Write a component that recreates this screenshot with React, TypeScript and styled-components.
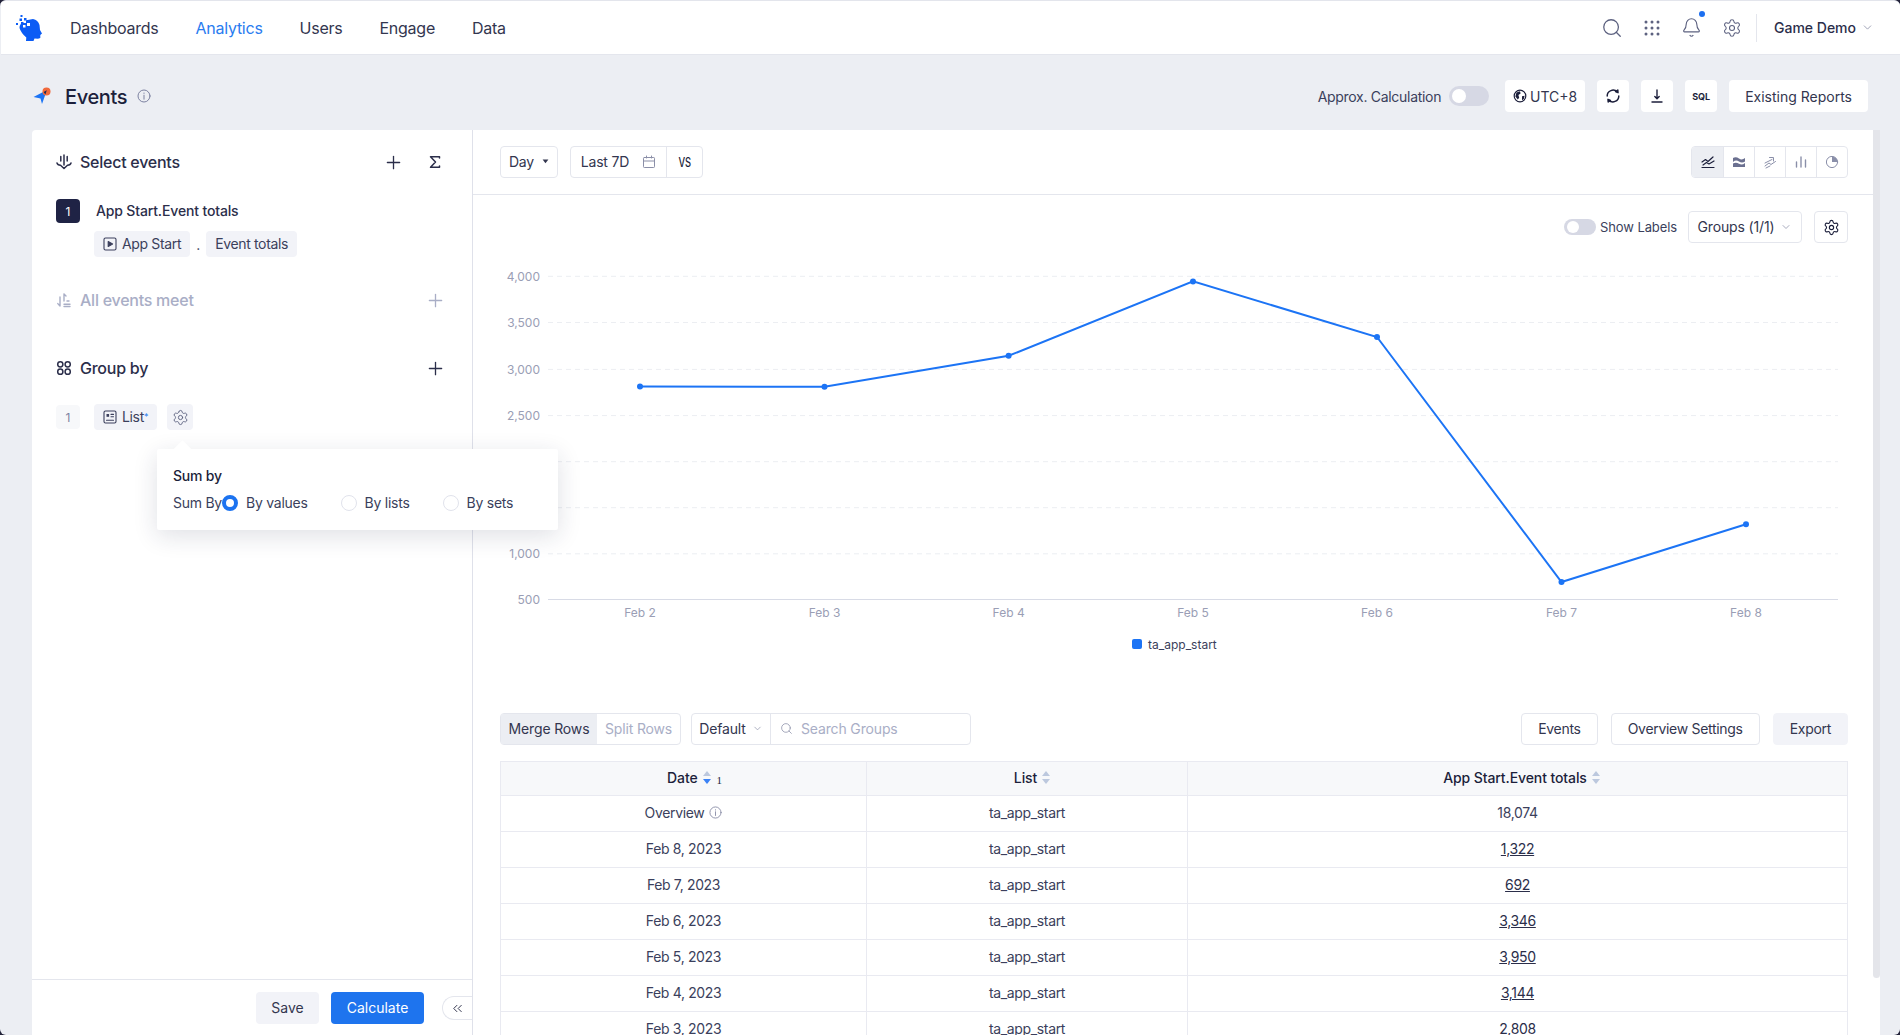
import { Search, Bell, Settings, ChevronDown, Plus, ChevronsLeft } from "lucide-react";
import styled, { createGlobalStyle } from "styled-components";

const GlobalStyle = createGlobalStyle`
  html, body {
    margin: 0;
    padding: 0;
    height: 100%;
    background: #23233a;
    overflow: hidden;
  }
  body {
    font-family: "Inter", "Liberation Sans", sans-serif;
    color: #2b2e4a;
  }
  * { box-sizing: border-box; }
`;

// Layout
const Page = styled.div`
  width: 1900px;
  height: 1035px;
  display: flex;
  flex-direction: column;
  background: #eceef3;
  border-radius: 6px;
  overflow: hidden;
  border-top: 1px solid #e3e5ec;
`;

const TopBar = styled.header`
  height: 54px;
  flex: none;
  display: flex;
  align-items: center;
  background: #fff;
  margin-left: 1px;
  border-bottom: 1px solid #e4e6ed;
  padding: 0 26px 0 13px;
`;

const Logo = styled.svg`
  width: 30px;
  height: 30px;
  flex: none;
`;

const Nav = styled.nav`
  display: flex;
  gap: 37px;
  margin-left: 26px;
`;

const NavLink = styled.a<{ $active?: boolean }>`
  font-size: 16px;
  line-height: 24px;
  letter-spacing: -0.25px;
  color: ${(p) => (p.$active ? "#2a7cf0" : "#33364f")};
`;

const TopActions = styled.div`
  margin-left: auto;
  display: flex;
  align-items: center;
  gap: 20px;
  color: #5d6280;
`;

const IconSlot = styled.span`
  position: relative;
  display: flex;
  width: 20px;
  height: 20px;
  align-items: center;
  justify-content: center;

  svg {
    flex: none;
  }
`;

const BellDot = styled.i`
  position: absolute;
  top: -7px;
  right: -3px;
  width: 6px;
  height: 6px;
  border-radius: 50%;
  background: #1c6ff0;
`;

const TopDivider = styled.span`
  width: 1px;
  height: 28px;
  background: #e4e6ed;
  margin-left: -6px;
`;

const Workspace = styled.span`
  display: flex;
  align-items: center;
  gap: 5px;
  margin-left: -3px;
  font-size: 14px;
  font-weight: 500;
  color: #2b2e4a;

  svg {
    color: #8b8fa8;
  }
`;

const TitleRow = styled.div`
  height: 75px;
  flex: none;
  display: flex;
  align-items: flex-start;
  padding: 25px 32px 0 33px;
`;

const TitleBlock = styled.div`
  height: 32px;
  display: flex;
  align-items: center;
`;

const Title = styled.h1`
  margin: 1px 0 0 13px;
  font-size: 20px;
  line-height: 28px;
  font-weight: 500;
  letter-spacing: -0.35px;
  color: #1c1f3b;
`;

const TitleInfo = styled.span`
  margin-left: 10px;
  display: flex;
  color: #7c81a0;
`;

const TitleActions = styled.div`
  margin-left: auto;
  display: flex;
  align-items: center;
  gap: 12px;
`;

const ApproxLabel = styled.span`
  font-size: 14px;
  letter-spacing: -0.3px;
  color: #3b3f5c;
  margin-right: -4px;
`;

const Toggle = styled.span<{ $small?: boolean }>`
  position: relative;
  display: block;
  flex: none;
  width: ${(p) => (p.$small ? 32 : 40)}px;
  height: ${(p) => (p.$small ? 16 : 20)}px;
  margin-right: ${(p) => (p.$small ? 0 : 4)}px;
  border-radius: 10px;
  background: #d6d8e4;

  &::after {
    content: "";
    position: absolute;
    left: 3px;
    top: ${(p) => (p.$small ? 2 : 3)}px;
    width: ${(p) => (p.$small ? 12 : 14)}px;
    height: ${(p) => (p.$small ? 12 : 14)}px;
    border-radius: 50%;
    background: #fff;
  }
`;

const SolidButton = styled.button<{ $square?: boolean; $width?: number }>`
  height: 32px;
  width: ${(p) => (p.$square ? "32px" : p.$width ? `${p.$width}px` : "auto")};
  padding: ${(p) => (p.$square || p.$width ? "0" : "0 16px")};
  display: flex;
  align-items: center;
  justify-content: center;
  gap: 3px;
  border: 0;
  border-radius: 4px;
  background: #fff;
  font-family: inherit;
  font-size: 14px;
  color: #33364f;
`;

const SqlMark = styled.span`
  font-size: 9px;
  font-weight: 700;
  color: #1c1f3b;
`;

const Body = styled.main`
  flex: 1;
  min-height: 0;
  display: flex;
  margin: 0 20px 0 32px;
  background: #fff;
  border-radius: 4px 4px 0 0;
`;

// Left panel
const LeftPanel = styled.aside`
  position: relative;
  z-index: 2;
  width: 441px;
  flex: none;
  display: flex;
  flex-direction: column;
  padding-top: 20px;
  border-right: 1px solid #dfe1ea;
`;

const SectionHead = styled.div<{ $muted?: boolean; $gap?: number }>`
  height: 24px;
  margin-top: ${(p) => p.$gap ?? 0}px;
  padding: 0 29px 0 24px;
  display: flex;
  align-items: center;
  color: ${(p) => (p.$muted ? "#a9aec6" : "#2b2e4a")};
`;

const SectionTitle = styled.span`
  margin-left: 8px;
  font-size: 16px;
  font-weight: 500;
  letter-spacing: -0.25px;
`;

const SectionTools = styled.div`
  margin-left: auto;
  display: flex;
  gap: 26px;
`;

const AddSlot = styled.span`
  width: 16px;
  height: 16px;
  display: flex;
  align-items: center;
  justify-content: center;

  svg {
    flex: none;
  }
`;

const EventRow = styled.div`
  margin: 25px 0 0 24px;
  display: flex;
  align-items: center;
  gap: 16px;
`;

const EventBadge = styled.span`
  width: 24px;
  height: 24px;
  border-radius: 4px;
  background: #1f2345;
  color: #fff;
  font-size: 12px;
  display: flex;
  align-items: center;
  justify-content: center;
`;

const EventName = styled.span`
  padding-bottom: 1px;
  font-size: 14px;
  font-weight: 500;
  letter-spacing: -0.15px;
  color: #2b2e4a;
`;

const ChipRow = styled.div`
  margin: 8px 0 0 62px;
  display: flex;
  align-items: center;
`;

const Chip = styled.span`
  height: 26px;
  padding: 0 9px 1px;
  display: flex;
  align-items: center;
  gap: 5px;
  border-radius: 4px;
  background: #f2f3f8;
  font-size: 14px;
  letter-spacing: -0.35px;
  color: #3b3f5c;
  white-space: nowrap;
`;

const ChipDot = styled.span`
  width: 16px;
  text-align: center;
  font-size: 14px;
  color: #3b3f5c;
`;

const GroupRow = styled.div`
  margin: 24px 0 0 24px;
  display: flex;
  align-items: center;
`;

const GroupIndex = styled.span`
  width: 24px;
  height: 24px;
  border-radius: 4px;
  background: #f7f8fa;
  color: #7c81a0;
  font-size: 12px;
  display: flex;
  align-items: center;
  justify-content: center;
  margin-right: 14px;
`;

const Asterisk = styled.sup`
  color: #2a7cf0;
  font-size: 9px;
  line-height: 0;
  margin-left: -5px;
`;

const GearChip = styled.span`
  width: 26px;
  height: 26px;
  margin-left: 10px;
  border-radius: 4px;
  background: #f2f3f8;
  color: #5d6280;
  display: flex;
  align-items: center;
  justify-content: center;
`;

const Popover = styled.div`
  position: absolute;
  left: 125px;
  top: 319px;
  width: 401px;
  height: 81px;
  padding: 17px 16px 0;
  background: #fff;
  border-radius: 2px;
  box-shadow: 0 6px 24px rgba(30, 35, 70, 0.14);

  &::before {
    content: "";
    position: absolute;
    left: 19px;
    top: -6px;
    width: 13px;
    height: 13px;
    background: #fff;
    transform: rotate(45deg);
  }
`;

const PopoverTitle = styled.div`
  position: relative;
  font-size: 14px;
  font-weight: 500;
  line-height: 20px;
  letter-spacing: -0.2px;
  color: #1c1f3b;
`;

const RadioLine = styled.div`
  margin-top: 7px;
  display: flex;
  align-items: center;
  font-size: 14px;
  line-height: 20px;
  letter-spacing: -0.25px;
  color: #3b3f5c;
`;

const RadioItem = styled.span`
  flex: none;
  display: flex;
  align-items: center;
  gap: 8px;
  margin-right: 33px;
  white-space: nowrap;
`;

const SumLabel = styled.span`
  flex: none;
  width: 49px;
  white-space: nowrap;
`;

const Radio = styled.i<{ $on?: boolean }>`
  display: block;
  flex: none;
  width: 16px;
  height: 16px;
  border-radius: 50%;
  background: #fff;
  border: ${(p) => (p.$on ? "4px solid #1c73f0" : "1px solid #e1e3ec")};
`;

const LeftFooter = styled.div`
  margin-top: auto;
  height: 56px;
  flex: none;
  padding-top: 12px;
  border-top: 1px solid #e4e6ed;
  display: flex;
  justify-content: flex-end;
  align-items: flex-start;
`;

const SaveButton = styled.button`
  width: 63px;
  height: 32px;
  padding: 0 0 2px;
  border: 0;
  border-radius: 4px;
  background: #f2f3f8;
  font-family: inherit;
  font-size: 14px;
  color: #33364f;
`;

const CalculateButton = styled.button`
  width: 93px;
  height: 32px;
  margin-left: 12px;
  padding: 0 0 2px;
  border: 0;
  border-radius: 4px;
  background: #1e74ee;
  font-family: inherit;
  font-size: 14px;
  color: #fff;
`;

const CollapseButton = styled.span`
  width: 30px;
  height: 24px;
  margin: 4px 0 0 18px;
  display: flex;
  align-items: center;
  justify-content: center;
  border: 1px solid #e4e6ed;
  border-right: 0;
  border-radius: 12px 0 0 12px;
  color: #33364f;
`;

// Right panel
const RightPanel = styled.section`
  flex: 1;
  min-width: 0;
  display: flex;
`;

const RightScroll = styled.div`
  flex: 1;
  min-width: 0;
  overflow: hidden;
`;

const ScrollTrack = styled.div`
  width: 7px;
  flex: none;
`;

const ScrollThumb = styled.div`
  height: 848px;
  border-radius: 0 0 4px 4px;
  background: #e4e5ea;
`;

const ChartToolbar = styled.div`
  height: 65px;
  padding: 16px 25px 0 27px;
  display: flex;
  align-items: flex-start;
  border-bottom: 1px solid #e4e6ed;
`;

const OutlineGroup = styled.div`
  height: 32px;
  display: flex;
  align-items: stretch;
  border: 1px solid #e4e6ed;
  border-radius: 4px;
  background: #fff;
`;

const OutlineCell = styled.span<{ $divided?: boolean; $width?: number; $fill?: boolean; $gap?: number }>`
  display: flex;
  align-items: center;
  justify-content: center;
  gap: ${(p) => p.$gap ?? 6}px;
  padding-bottom: 1px;
  font-size: 14px;
  letter-spacing: -0.15px;
  color: #33364f;
  width: ${(p) => (p.$width ? `${p.$width}px` : "auto")};
  border-left: ${(p) => (p.$divided ? "1px solid #e4e6ed" : "0")};
  background: ${(p) => (p.$fill ? "#eceef3" : "transparent")};
  white-space: nowrap;
`;

const SearchCell = styled(OutlineCell)`
  justify-content: flex-start;
  gap: 8px;
  padding-left: 9px;
`;

const DayGroup = styled(OutlineGroup)`
  margin-right: 12px;
`;

const VsMark = styled.span`
  display: inline-block;
  font-size: 13px;
  font-weight: 500;
  color: #1c1f3b;
  transform: scaleX(0.72);
`;

const MutedIcon = styled.span`
  display: flex;
  color: #8b8fa8;
`;

const DarkCaret = styled.span`
  display: flex;
  color: #33364f;
`;

const ChartTypes = styled(OutlineGroup)`
  margin-left: auto;
  overflow: hidden;
`;

const ChartTypeCell = styled(OutlineCell)`
  color: #8a8fa9;
`;

const ChartControls = styled.div`
  height: 32px;
  margin-top: 16px;
  padding-right: 25px;
  display: flex;
  align-items: center;
  justify-content: flex-end;
`;

const ShowLabel = styled.span`
  margin: 0 11px 0 4px;
  font-size: 13px;
  letter-spacing: -0.1px;
  color: #3b3f5c;
`;

const GearBox = styled(OutlineGroup)`
  width: 34px;
  margin-left: 12px;
  align-items: center;
  justify-content: center;
  color: #1c1f3b;
`;

const ChartSvg = styled.svg`
  display: block;
  margin-top: 7px;
  width: 1400px;
  height: 380px;

  text {
    font-family: "Inter", "Liberation Sans", sans-serif;
    font-size: 12px;
    fill: #9a9eb5;
  }
`;

const Legend = styled.div`
  height: 30px;
  padding: 0 0 2px 659px;
  display: flex;
  align-items: center;
  gap: 6px;
  font-size: 12px;
  color: #3b3f5c;
`;

const LegendSwatch = styled.i`
  width: 10px;
  height: 10px;
  border-radius: 2px;
  background: #1c74f5;
`;

const TableSection = styled.div`
  margin-top: 53px;
  padding: 0 25px 0 27px;
`;

const TableToolbar = styled.div`
  height: 32px;
  margin-bottom: 16px;
  display: flex;
  justify-content: space-between;
`;

const ToolbarSide = styled.div<{ $gap: number }>`
  display: flex;
  gap: ${(p) => p.$gap}px;
`;

const SearchText = styled.span`
  color: #a9aec6;
  font-size: 14px;
`;

const LineButton = styled.button`
  height: 32px;
  padding: 0 16px 1px;
  border: 1px solid #e4e6ed;
  border-radius: 4px;
  background: #fff;
  font-family: inherit;
  font-size: 14px;
  letter-spacing: -0.3px;
  color: #33364f;
`;

const GreyButton = styled(LineButton)`
  border-color: #f2f3f8;
  background: #f2f3f8;
`;

const DataTable = styled.table`
  width: 1347px;
  table-layout: fixed;
  border-collapse: collapse;
  font-size: 14px;
  letter-spacing: -0.35px;
  color: #3b3f5c;
  text-align: center;

  th, td {
    height: 36px;
    padding: 0 0 2px;
    border: 1px solid #e9eaf1;
  }

  th {
    height: 34px;
    background: #f7f8fa;
    font-weight: 500;
    letter-spacing: -0.1px;
    color: #1c1f3b;
  }
`;

const SortWrap = styled.span<{ $shift: number }>`
  display: inline-flex;
  align-items: center;
  gap: 5px;
  padding-left: ${(p) => p.$shift}px;
`;

const SortIndex = styled.span`
  font-family: "Liberation Serif", serif;
  font-size: 11px;
  margin: 5px 0 0 1px;
`;

const CountLink = styled.a`
  color: #2b2e4a;
  text-decoration: underline;
`;

const OverviewCell = styled.span`
  display: inline-flex;
  align-items: center;
  gap: 5px;
`;

// Icons
const stroke = { fill: "none", stroke: "currentColor", strokeWidth: 1.3, strokeLinecap: "round" as const, strokeLinejoin: "round" as const };

const BrainLogo = () => (
  <Logo viewBox="14 13 30 30">
    <path fill="#0b5cf5" d="M25 20.5 L33 19 Q38 20 39.5 25 L40 30 L42 33.5 L40.3 35 L40.3 38 L38 38.8 L34.5 38.5 L33.5 41 L26 41 L26.3 37.5 Q21 33 19.5 28 Q19.5 23 25 20.5 Z" />
    <g fill="#fff">
      <rect x="23" y="20" width="3" height="3" />
      <rect x="27" y="23" width="3" height="3" />
      <rect x="23" y="25" width="2.5" height="2.5" />
    </g>
    <g fill="#0b5cf5">
      <rect x="20.5" y="15" width="2" height="2" />
      <rect x="24" y="18" width="2.5" height="2.5" />
      <rect x="19.5" y="18.5" width="2.5" height="2.5" />
      <rect x="16" y="23" width="2" height="2" />
      <rect x="21" y="22" width="2.5" height="2.5" />
      <rect x="27" y="20" width="2.5" height="2.5" />
    </g>
  </Logo>
);

const GridDots = () => (
  <svg width="16" height="16" viewBox="0 0 16 16" fill="currentColor">
    {[2, 8, 14].flatMap((y) => [2, 8, 14].map((x) => <circle key={`${x}-${y}`} cx={x} cy={y} r="1.5" />))}
  </svg>
);

const Rocket = () => (
  <svg width="19" height="18" viewBox="33 88 19 18">
    <path fill="#1c74f5" d="M33.5 98 L47 91 L42 105 L40.5 99.5 Z" />
    <circle cx="46.5" cy="92.5" r="4" fill="#f0693c" />
    <path fill="#1b2a55" d="M43.6 93 L46.8 91.3 L45.4 95.4 Z" />
  </svg>
);

const InfoIcon = ({ size = 14 }: { size?: number }) => (
  <svg width={size} height={size} viewBox="0 0 14 14" {...stroke} strokeWidth={1}>
    <circle cx="7" cy="7" r="6" />
    <path d="M7 6.2 V10.2 M7 4 V4.4" />
  </svg>
);

const GlobeIcon = () => (
  <svg width="14" height="14" viewBox="0 0 14 14">
    <circle cx="7" cy="7" r="5.8" fill="none" stroke="#1c1f3b" strokeWidth="1.2" />
    <path fill="#1c1f3b" d="M3.4 3.4 L7 2.2 L7.6 4.6 L5.4 6 L6.2 8.8 L4.8 10.6 L2.4 7.6 Z M9 7.2 L11.6 6.8 L10.8 10 L9 11.2 Z" />
  </svg>
);

const RefreshIcon = () => (
  <svg width="16" height="16" viewBox="0 0 16 16" {...stroke} stroke="#1c1f3b" strokeWidth={1.5}>
    <path d="M2.2 8 A5.8 5.8 0 0 1 12.3 4.1 M13.8 8 A5.8 5.8 0 0 1 3.7 11.9" />
    <path fill="#1c1f3b" d="M10.6 3.6 L13 4.6 L12.8 2 Z M5.4 12.4 L3 11.4 L3.2 14 Z" />
  </svg>
);

const DownloadIcon = () => (
  <svg width="16" height="16" viewBox="0 0 16 16" {...stroke} stroke="#1c1f3b" strokeWidth={1.4}>
    <path d="M8 2 V10.5 M5.8 8.6 L8 10.8 L10.2 8.6 M3 14 H13" />
  </svg>
);

const AnchorIcon = () => (
  <svg width="16" height="16" viewBox="0 0 16 16" {...stroke} strokeWidth={1.5}>
    <path d="M8 1 V11 M4.8 2.5 V7 M11.2 2.5 V7 M1 9 Q1.5 11 4.5 11.2 L8 14.5 L11.5 11.2 Q14.5 11 15 9" />
  </svg>
);

const SumIcon = () => (
  <svg width="16" height="16" viewBox="0 0 16 16" {...stroke} strokeWidth={1.5}>
    <path d="M12.5 4 V2.8 H3.5 L8.5 8 L3.5 13.2 H12.5 V12" />
  </svg>
);

const SortFilterIcon = () => (
  <svg width="16" height="16" viewBox="0 0 16 16" {...stroke} strokeWidth={1.4}>
    <path d="M4 5 V14 M1.8 11.6 L4 14 M8 2 V9 M8 2 L10 4 M8 12.2 H14 M8 14.5 H14 M11 9 H13" />
  </svg>
);

const LoopIcon = () => (
  <svg width="16" height="16" viewBox="0 0 16 16" {...stroke} strokeWidth={1.5}>
    <circle cx="4.3" cy="4.3" r="2.6" />
    <circle cx="11.7" cy="4.3" r="2.6" />
    <circle cx="4.3" cy="11.7" r="2.6" />
    <circle cx="11.7" cy="11.7" r="2.6" />
  </svg>
);

const PlayBoxIcon = () => (
  <svg width="14" height="14" viewBox="0 0 14 14" {...stroke} strokeWidth={1.1}>
    <rect x="1" y="1" width="12" height="12" rx="1.5" />
    <path fill="currentColor" d="M5.2 4.6 L9.6 7 L5.2 9.4 Z" />
  </svg>
);

const ListBoxIcon = () => (
  <svg width="14" height="14" viewBox="0 0 14 14" {...stroke} strokeWidth={1.1}>
    <rect x="1" y="1" width="12" height="12" rx="1.5" />
    <path d="M3.5 10.2 H10.5 M8 4.4 H10.5 M8 6.8 H10.5" />
    <rect x="3.5" y="4" width="2.6" height="2.8" fill="currentColor" stroke="none" />
  </svg>
);

const CalendarIcon = () => (
  <svg width="14" height="14" viewBox="0 0 14 14" {...stroke} strokeWidth={1}>
    <rect x="1.5" y="2.5" width="11" height="10" rx="0.8" />
    <path d="M1.5 6 H12.5 M4.5 1 V3 M9.5 1 V3" />
  </svg>
);

const SolidCaret = () => (
  <svg width="7" height="5" viewBox="0 0 7 5" fill="currentColor">
    <path d="M0.6 0.6 H6.4 L3.5 4.2 Z" />
  </svg>
);

const LineTypeIcon = () => (
  <svg width="14" height="14" viewBox="0 0 14 14" {...stroke} stroke="#1c1f3b" strokeWidth={1.2}>
    <path d="M1 7 L4.5 4.5 L7 6.5 L12 2 M2 10 L5.5 7.5 L8 9 L13 6 M1 12.5 H13" />
  </svg>
);

const AreaTypeIcon = () => (
  <svg width="14" height="14" viewBox="0 0 14 14" fill="#6b7090">
    <path d="M1 3 Q4 1.5 7 3.5 T13 3 V6.5 Q10 8.5 7 6.5 T1 7 Z M1 8.5 Q4 7 7 8.8 T13 8 V12 H1 Z" />
  </svg>
);

const StackTypeIcon = () => (
  <svg width="14" height="14" viewBox="0 0 14 14" {...stroke} strokeWidth={1}>
    <path d="M2 8 L9 4.5 M6.5 2.5 H10.5 V6 M2 11 L6 8 L8 9.5 L12.5 6.5 M3 13 L7 11" />
  </svg>
);

const BarTypeIcon = () => (
  <svg width="14" height="14" viewBox="0 0 14 14" {...stroke} strokeWidth={1.4}>
    <path d="M2.5 12 V7 M7 12 V2 M11.5 12 V5" />
  </svg>
);

const PieTypeIcon = () => (
  <svg width="14" height="14" viewBox="0 0 14 14" {...stroke} strokeWidth={1}>
    <circle cx="7" cy="7" r="5.6" />
    <path fill="currentColor" stroke="none" d="M7 1.4 A5.6 5.6 0 0 1 12.6 7 L7 7 Z" />
  </svg>
);

const SortCaret = ({ active }: { active?: boolean }) => (
  <svg width="8" height="13" viewBox="0 0 8 13">
    <path fill="#bcc8de" d="M4 0 L8 5 H0 Z" />
    <path fill={active ? "#3b82f6" : "#bcc8de"} d="M4 13 L0 8 H8 Z" />
  </svg>
);

// Data
const yTicks = [
  { label: "4,000", y: 276.3 },
  { label: "3,500", y: 322.5 },
  { label: "3,000", y: 369.4 },
  { label: "2,500", y: 415.6 },
  { label: "2,000", y: 461.7 },
  { label: "1,500", y: 507.7 },
  { label: "1,000", y: 553.8 },
];

const points = [
  { label: "Feb 2", x: 640, y: 386.5 },
  { label: "Feb 3", x: 824.5, y: 386.8 },
  { label: "Feb 4", x: 1008.6, y: 355.8 },
  { label: "Feb 5", x: 1193, y: 281.4 },
  { label: "Feb 6", x: 1377, y: 337 },
  { label: "Feb 7", x: 1561.5, y: 582 },
  { label: "Feb 8", x: 1746, y: 524.2 },
];

const rows = [
  { date: "Feb 8, 2023", value: "1,322" },
  { date: "Feb 7, 2023", value: "692" },
  { date: "Feb 6, 2023", value: "3,346" },
  { date: "Feb 5, 2023", value: "3,950" },
  { date: "Feb 4, 2023", value: "3,144" },
  { date: "Feb 3, 2023", value: "2,808" },
];

const chartTypeIcons = [LineTypeIcon, AreaTypeIcon, StackTypeIcon, BarTypeIcon, PieTypeIcon];

const Chart = () => (
  <ChartSvg viewBox="473 250 1400 380">
    {yTicks.map((t) => (
      <g key={t.label}>
        <text x="540" y={t.y + 4.5} textAnchor="end">{t.label}</text>
        <line x1="548" x2="1838" y1={t.y} y2={t.y} stroke="#eceef2" strokeDasharray="5 4" />
      </g>
    ))}
    <text x="540" y="604" textAnchor="end">500</text>
    <line x1="548" x2="1838" y1="599.5" y2="599.5" stroke="#d8dbe6" />
    {points.map((p) => (
      <text key={p.label} x={p.x} y="617" textAnchor="middle">{p.label}</text>
    ))}
    <polyline fill="none" stroke="#1c74f5" strokeWidth="2" points={points.map((p) => `${p.x},${p.y}`).join(" ")} />
    {points.map((p) => (
      <circle key={p.x} cx={p.x} cy={p.y} r="3" fill="#1c74f5" />
    ))}
  </ChartSvg>
);

export default function App() {
  return (
    <>
      <GlobalStyle />
      <Page>
        <TopBar>
          <BrainLogo />
          <Nav>
            <NavLink>Dashboards</NavLink>
            <NavLink $active>Analytics</NavLink>
            <NavLink>Users</NavLink>
            <NavLink>Engage</NavLink>
            <NavLink>Data</NavLink>
          </Nav>
          <TopActions>
            <IconSlot><Search size={22} strokeWidth={1.4} /></IconSlot>
            <IconSlot><GridDots /></IconSlot>
            <IconSlot>
              <Bell size={21} strokeWidth={1.3} />
              <BellDot />
            </IconSlot>
            <IconSlot><Settings size={20} strokeWidth={1.3} /></IconSlot>
            <TopDivider />
            <Workspace>
              Game Demo
              <ChevronDown size={13} strokeWidth={1.5} />
            </Workspace>
          </TopActions>
        </TopBar>

        <TitleRow>
          <TitleBlock>
            <Rocket />
            <Title>Events</Title>
            <TitleInfo><InfoIcon /></TitleInfo>
          </TitleBlock>
          <TitleActions>
            <ApproxLabel>Approx. Calculation</ApproxLabel>
            <Toggle />
            <SolidButton $width={80}><GlobeIcon />UTC+8</SolidButton>
            <SolidButton $square><RefreshIcon /></SolidButton>
            <SolidButton $square><DownloadIcon /></SolidButton>
            <SolidButton $square><SqlMark>SQL</SqlMark></SolidButton>
            <SolidButton>Existing Reports</SolidButton>
          </TitleActions>
        </TitleRow>

        <Body>
          <LeftPanel>
            <SectionHead>
              <AnchorIcon />
              <SectionTitle>Select events</SectionTitle>
              <SectionTools>
                <AddSlot><Plus size={21} strokeWidth={1.5} /></AddSlot>
                <SumIcon />
              </SectionTools>
            </SectionHead>
            <EventRow>
              <EventBadge>1</EventBadge>
              <EventName>App Start.Event totals</EventName>
            </EventRow>
            <ChipRow>
              <Chip><PlayBoxIcon />App Start</Chip>
              <ChipDot>.</ChipDot>
              <Chip>Event totals</Chip>
            </ChipRow>

            <SectionHead $muted $gap={31}>
              <SortFilterIcon />
              <SectionTitle>All events meet</SectionTitle>
              <SectionTools><AddSlot><Plus size={21} strokeWidth={1.5} /></AddSlot></SectionTools>
            </SectionHead>

            <SectionHead $gap={44}>
              <LoopIcon />
              <SectionTitle>Group by</SectionTitle>
              <SectionTools><AddSlot><Plus size={21} strokeWidth={1.5} /></AddSlot></SectionTools>
            </SectionHead>
            <GroupRow>
              <GroupIndex>1</GroupIndex>
              <Chip><ListBoxIcon />List<Asterisk>*</Asterisk></Chip>
              <GearChip><Settings size={17} strokeWidth={1.3} /></GearChip>
            </GroupRow>

            <Popover>
              <PopoverTitle>Sum by</PopoverTitle>
              <RadioLine>
                <SumLabel>Sum By</SumLabel>
                <RadioItem><Radio $on />By values</RadioItem>
                <RadioItem><Radio />By lists</RadioItem>
                <RadioItem><Radio />By sets</RadioItem>
              </RadioLine>
            </Popover>

            <LeftFooter>
              <SaveButton>Save</SaveButton>
              <CalculateButton>Calculate</CalculateButton>
              <CollapseButton><ChevronsLeft size={15} strokeWidth={1.6} /></CollapseButton>
            </LeftFooter>
          </LeftPanel>

          <RightPanel>
            <RightScroll>
              <ChartToolbar>
                <DayGroup>
                  <OutlineCell $width={56} $gap={8}>Day<DarkCaret><SolidCaret /></DarkCaret></OutlineCell>
                </DayGroup>
                <OutlineGroup>
                  <OutlineCell $width={95} $gap={13}>
                    Last 7D
                    <MutedIcon><CalendarIcon /></MutedIcon>
                  </OutlineCell>
                  <OutlineCell $divided $width={36}><VsMark>VS</VsMark></OutlineCell>
                </OutlineGroup>
                <ChartTypes>
                  {chartTypeIcons.map((Icon, i) => (
                    <ChartTypeCell key={i} $divided={i > 0} $fill={i === 0} $width={31}><Icon /></ChartTypeCell>
                  ))}
                </ChartTypes>
              </ChartToolbar>

              <ChartControls>
                <Toggle $small />
                <ShowLabel>Show Labels</ShowLabel>
                <OutlineGroup>
                  <OutlineCell $width={112}>
                    Groups (1/1)
                    <MutedIcon><ChevronDown size={12} strokeWidth={1.5} /></MutedIcon>
                  </OutlineCell>
                </OutlineGroup>
                <GearBox><Settings size={17} strokeWidth={1.6} /></GearBox>
              </ChartControls>

              <Chart />
              <Legend>
                <LegendSwatch />
                ta_app_start
              </Legend>

              <TableSection>
                <TableToolbar>
                  <ToolbarSide $gap={10}>
                    <OutlineGroup>
                      <OutlineCell $fill $width={96}>Merge Rows</OutlineCell>
                      <OutlineCell $width={83}><SearchText>Split Rows</SearchText></OutlineCell>
                    </OutlineGroup>
                    <OutlineGroup>
                      <OutlineCell $width={78}>
                        Default
                        <MutedIcon><ChevronDown size={11} strokeWidth={1.5} /></MutedIcon>
                      </OutlineCell>
                      <SearchCell $divided $width={200}>
                        <MutedIcon><Search size={13} strokeWidth={1.4} /></MutedIcon>
                        <SearchText>Search Groups</SearchText>
                      </SearchCell>
                    </OutlineGroup>
                  </ToolbarSide>
                  <ToolbarSide $gap={13}>
                    <LineButton>Events</LineButton>
                    <LineButton>Overview Settings</LineButton>
                    <GreyButton>Export</GreyButton>
                  </ToolbarSide>
                </TableToolbar>

                <DataTable>
                  <colgroup>
                    <col width="366" />
                    <col width="321" />
                    <col width="660" />
                  </colgroup>
                  <thead>
                    <tr>
                      <th><SortWrap $shift={22}>Date<SortCaret active /><SortIndex>1</SortIndex></SortWrap></th>
                      <th><SortWrap $shift={10}>List<SortCaret /></SortWrap></th>
                      <th><SortWrap $shift={8}>App Start.Event totals<SortCaret /></SortWrap></th>
                    </tr>
                  </thead>
                  <tbody>
                    <tr>
                      <td>
                        <OverviewCell>
                          Overview
                          <MutedIcon><InfoIcon size={13} /></MutedIcon>
                        </OverviewCell>
                      </td>
                      <td>ta_app_start</td>
                      <td>18,074</td>
                    </tr>
                    {rows.map((r) => (
                      <tr key={r.date}>
                        <td>{r.date}</td>
                        <td>ta_app_start</td>
                        <td><CountLink>{r.value}</CountLink></td>
                      </tr>
                    ))}
                  </tbody>
                </DataTable>
              </TableSection>
            </RightScroll>
            <ScrollTrack><ScrollThumb /></ScrollTrack>
          </RightPanel>
        </Body>
      </Page>
    </>
  );
}
